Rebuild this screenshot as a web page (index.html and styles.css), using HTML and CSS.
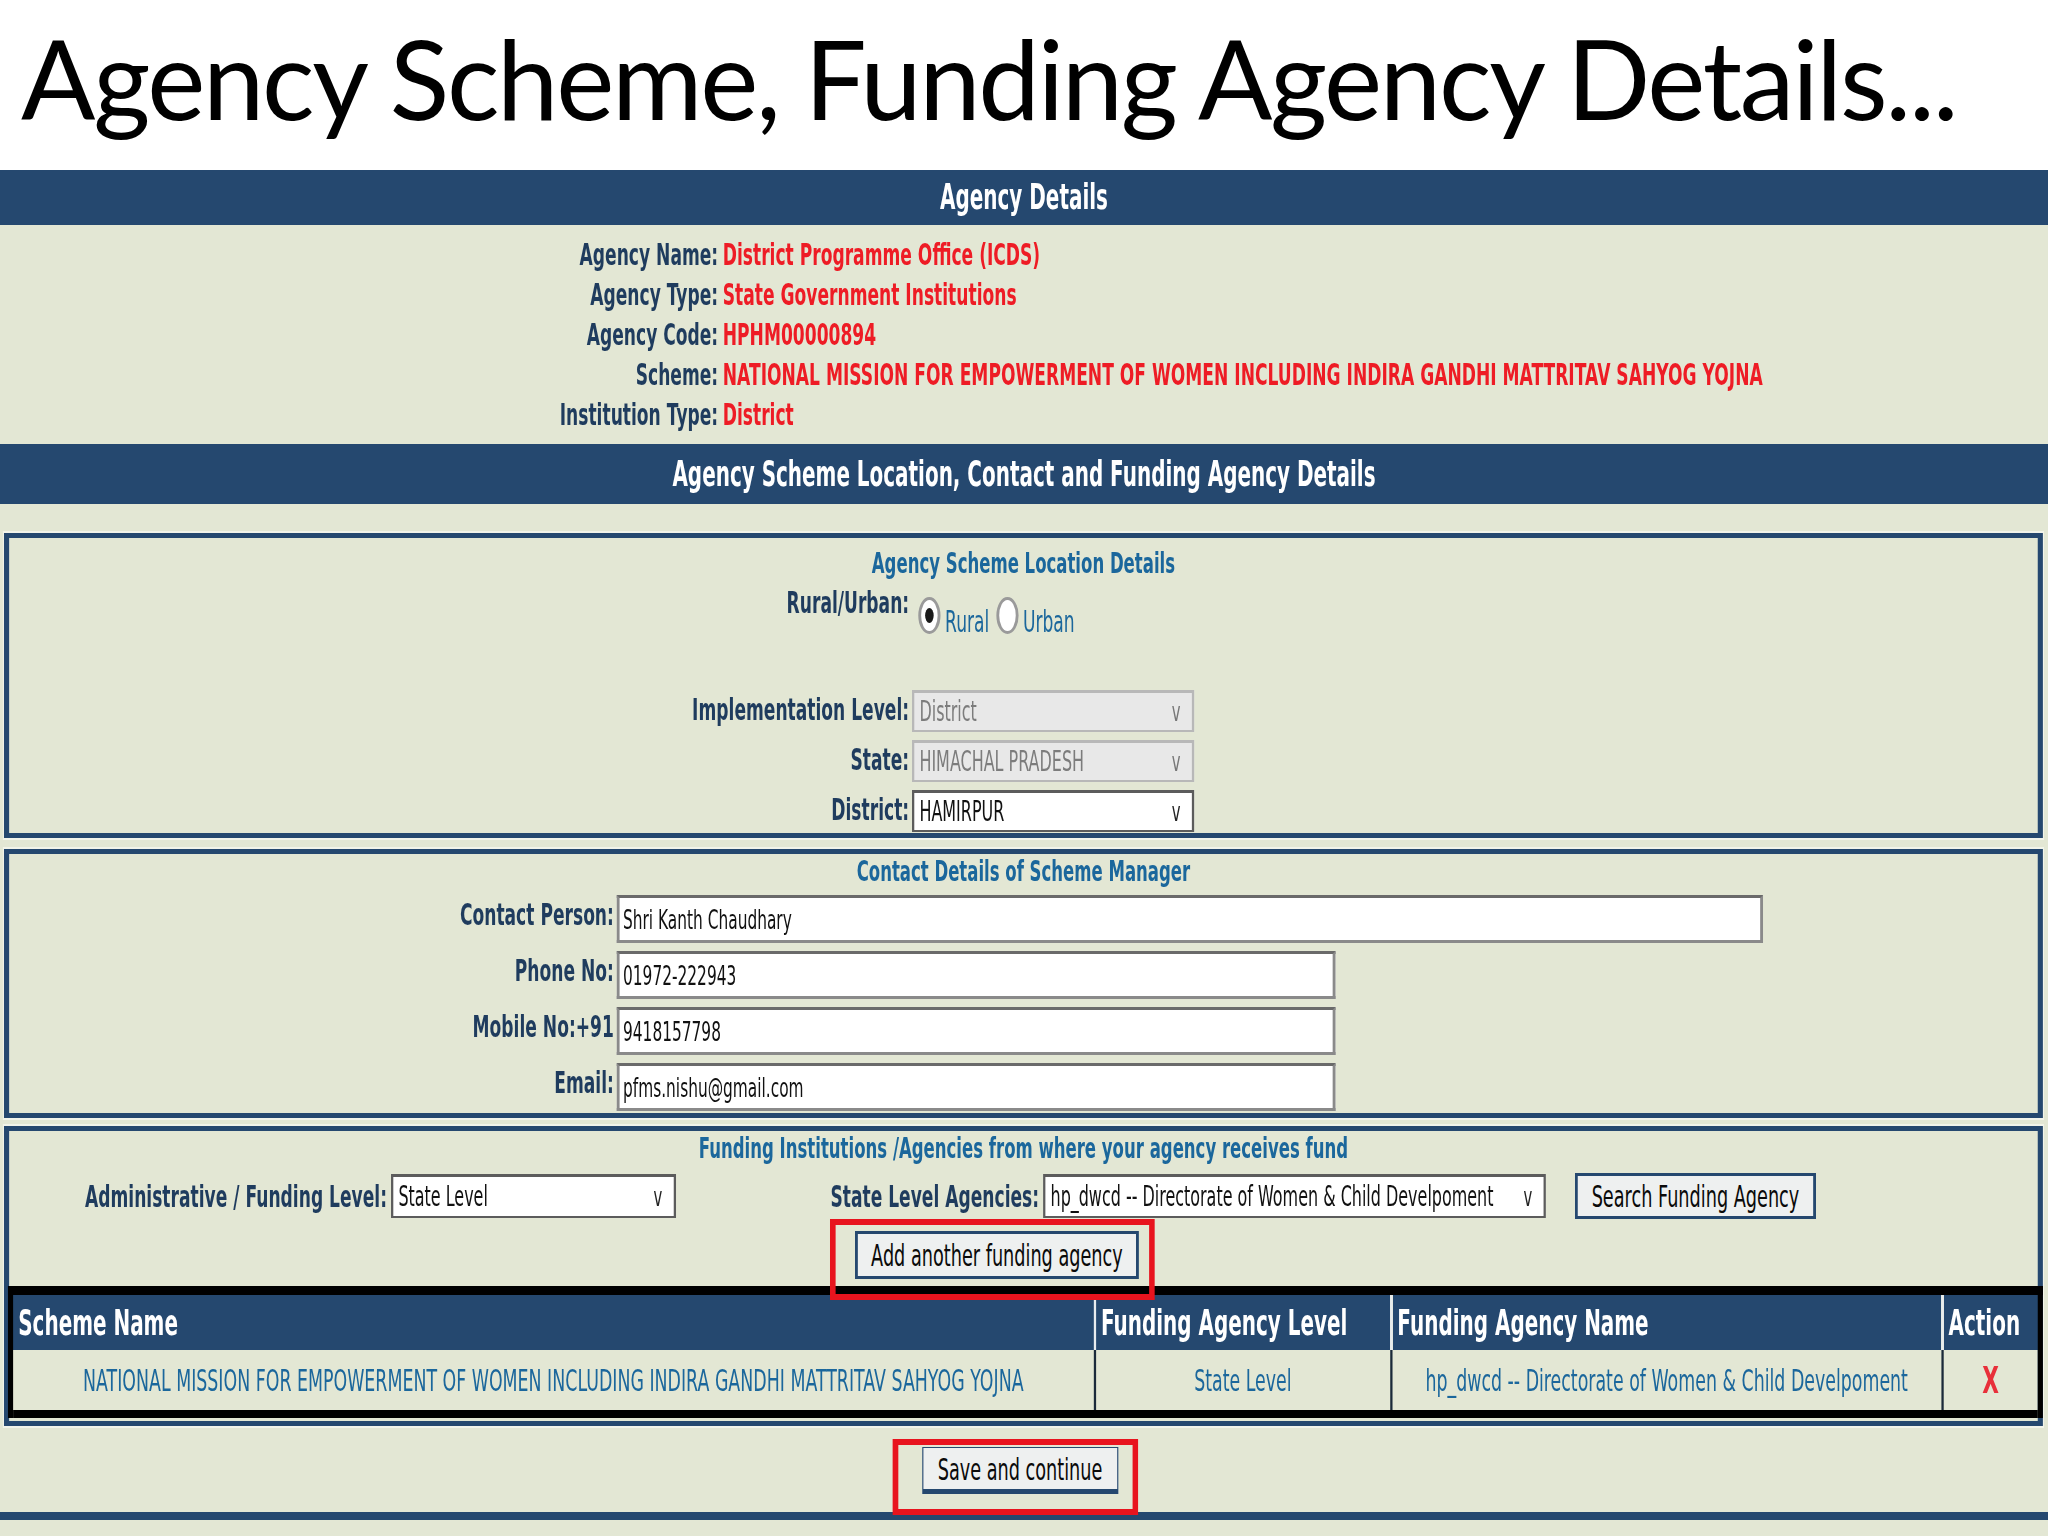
FILE: index.html
```html
<!DOCTYPE html>
<html lang="en">
<head>
    <meta charset="UTF-8">
    <meta name="viewport" content="width=device-width, initial-scale=1.0">
    <title>Agency Scheme, Funding Agency Details</title>
    <link rel="stylesheet" href="styles.css">
</head>
<body>
    <h1 class="slide-title">Agency Scheme, Funding Agency Details...</h1>

    <!-- the captured form is squeezed sideways, as in the slide -->
    <div class="sheet-frame">
    <div class="sheet">
        <div class="bar bar-first">Agency Details</div>
        <div class="agency-info">
            <div class="info-row"><span class="lbl">Agency Name:</span><span class="val">District Programme Office (ICDS)</span></div>
            <div class="info-row"><span class="lbl">Agency Type:</span><span class="val">State Government Institutions</span></div>
            <div class="info-row"><span class="lbl">Agency Code:</span><span class="val">HPHM00000894</span></div>
            <div class="info-row"><span class="lbl">Scheme:</span><span class="val">NATIONAL MISSION FOR EMPOWERMENT OF WOMEN INCLUDING INDIRA GANDHI MATTRITAV SAHYOG YOJNA</span></div>
            <div class="info-row"><span class="lbl">Institution Type:</span><span class="val">District</span></div>
        </div>
        <div class="bar bar-second">Agency Scheme Location, Contact and Funding Agency Details</div>

        <div class="form-area">
            <!-- location -->
            <div class="box box-location">
                <div class="box-title">Agency Scheme Location Details</div>
                <div class="loc-grid">
                    <label class="form-lbl">Rural/Urban:</label>
                    <div class="radios">
                        <span class="radio checked"></span><span class="radio-text">Rural</span>
                        <span class="radio"></span><span class="radio-text">Urban</span>
                    </div>
                    <label class="form-lbl spaced">Implementation Level:</label>
                    <div class="sel disabled spaced"><span>District</span><span class="arrow">v</span></div>
                    <label class="form-lbl">State:</label>
                    <div class="sel disabled"><span>HIMACHAL PRADESH</span><span class="arrow">v</span></div>
                    <label class="form-lbl">District:</label>
                    <div class="sel"><span>HAMIRPUR</span><span class="arrow">v</span></div>
                </div>
            </div>

            <!-- contact -->
            <div class="box box-contact">
                <div class="box-title">Contact Details of Scheme Manager</div>
                <div class="contact-grid">
                    <label class="form-lbl">Contact Person:</label>
                    <input class="txt txt-long" type="text" value="Shri Kanth Chaudhary">
                    <label class="form-lbl">Phone No:</label>
                    <input class="txt" type="text" value="01972-222943">
                    <label class="form-lbl">Mobile No:+91</label>
                    <input class="txt" type="text" value="9418157798">
                    <label class="form-lbl">Email:</label>
                    <input class="txt" type="text" value="pfms.nishu@gmail.com">
                </div>
            </div>

            <!-- funding -->
            <div class="box box-funding">
                <div class="box-title">Funding Institutions /Agencies from where your agency receives fund</div>
                <div class="fund-row">
                    <label class="form-lbl fund-lbl1">Administrative / Funding Level:</label>
                    <div class="sel sel-level"><span>State Level</span><span class="arrow">v</span></div>
                    <label class="form-lbl fund-lbl2">State Level Agencies:</label>
                    <div class="sel sel-agency"><span>hp_dwcd -- Directorate of Women &amp; Child Develpoment</span><span class="arrow">v</span></div>
                    <button class="btn btn-search">Search Funding Agency</button>
                </div>
                <div class="add-row">
                    <button class="btn btn-add marked">Add another funding agency</button>
                </div>
                <table class="fund-table">
                    <colgroup>
                        <col class="col-scheme">
                        <col class="col-level">
                        <col class="col-name">
                        <col class="col-action">
                    </colgroup>
                    <thead>
                        <tr>
                            <th>Scheme Name</th>
                            <th>Funding Agency Level</th>
                            <th>Funding Agency Name</th>
                            <th>Action</th>
                        </tr>
                    </thead>
                    <tbody>
                        <tr>
                            <td>NATIONAL MISSION FOR EMPOWERMENT OF WOMEN INCLUDING INDIRA GANDHI MATTRITAV SAHYOG YOJNA</td>
                            <td>State Level</td>
                            <td>hp_dwcd -- Directorate of Women &amp; Child Develpoment</td>
                            <td><span class="del">X</span></td>
                        </tr>
                    </tbody>
                </table>
            </div>

            <div class="save-row">
                <button class="btn btn-save marked">Save and continue</button>
            </div>
        </div>
        <div class="bottom-line"></div>
    </div>
    </div>
</body>
</html>
```

FILE: styles.css
```css
/* horizontal sizes inside .sheet are pre-scale (x 0.57 on screen) */
html{
    overflow: hidden;
}
body{
    margin: 0;
    background-color: #e3e7d4;
    font-family: "DejaVu Sans", Verdana, sans-serif;
    color: #1f3c5e;
    overflow: hidden;
}
.slide-title{
    margin: 0;
    height: 170px;
    box-sizing: border-box;
    background-color: #fff;
    padding-left: 21px;
    font-family: Lato, "Liberation Sans", sans-serif;
    font-weight: normal;
    font-size: 110px;
    letter-spacing: -2.3px;
    line-height: 154px;
    color: #000;
    white-space: nowrap;
}
.sheet-frame{
    width: 100%;
    overflow: hidden;
}
.sheet{
    width: 3593px;
    transform: scaleX(0.57);
    transform-origin: 0 0;
}
.bar{
    background-color: #25486f;
    color: #fff;
    text-align: center;
    font-weight: bold;
    font-size: 35px;
    white-space: nowrap;
}
.bar-first{
    height: 55px;
    line-height: 55px;
}
.bar-second{
    height: 60px;
    line-height: 60px;
}
.agency-info{
    height: 219px;
    box-sizing: border-box;
    padding-top: 10px;
}
.info-row{
    display: grid;
    grid-template-columns: 1260px 1fr;
    column-gap: 8px;
    height: 40px;
    line-height: 40px;
    font-weight: bold;
    font-size: 30px;
    white-space: nowrap;
}
.info-row .lbl{
    text-align: right;
}
.info-row .val{
    color: #ee1c25;
}
.form-area{
    padding-top: 29px;
}
.box{
    margin: 0 9px 0 7px;
    border-style: solid;
    border-color: #25486f;
    border-width: 5px 9px;
    box-shadow: 0 0 0 2px #f2f4ea;
}
.box-title{
    text-align: center;
    font-weight: bold;
    color: #1b679c;
    font-size: 29px;
    white-space: nowrap;
}
.form-lbl{
    text-align: right;
    font-weight: bold;
    font-size: 30px;
    white-space: nowrap;
}

/* location box */
.box-location{
    height: 305px;
    box-sizing: border-box;
}
.box-location .box-title{
    padding-top: 5px;
    line-height: 40px;
}
.loc-grid{
    display: grid;
    grid-template-columns: 1579px 495px;
    column-gap: 5px;
    row-gap: 8px;
}
.loc-grid .form-lbl{
    line-height: 40px;
}
.loc-grid .spaced{
    margin-top: 48px;
}
.radios{
    display: flex;
    align-items: flex-start;
    box-sizing: border-box;
    padding: 14px 0 0 11px;
    height: 51px;
}
.radio{
    flex: none;
    width: 39px;
    height: 37px;
    border-style: solid;
    border-color: #9a9a9a;
    border-width: 3px 5px;
    border-radius: 50%;
    background-color: #fff;
    box-sizing: border-box;
    position: relative;
}
.radio.checked::after{
    content: "";
    position: absolute;
    left: 7px;
    top: 8px;
    width: 15px;
    height: 15px;
    border-radius: 50%;
    background-color: #1a1a1a;
}
.radio-text{
    color: #1b679c;
    font-size: 30px;
    line-height: 28px;
    padding: 11px 12px 0 8px;
}
.sel{
    display: flex;
    justify-content: space-between;
    align-items: center;
    height: 42px;
    box-sizing: border-box;
    background-color: #fff;
    border-style: solid;
    border-color: #5c5c5c;
    border-width: 3px 4px 2px 4px;
    padding: 0 20px 0 9px;
    font-size: 28px;
    color: #111;
    white-space: nowrap;
    overflow: hidden;
}
.sel.disabled{
    background-color: #e8e8e8;
    border-color: #b8b8b8;
    color: #7c7c7c;
}
.sel .arrow{
    font-size: 26px;
    color: #222;
}
.sel.disabled .arrow{
    color: #777;
}

/* contact box */
.box-contact{
    margin-top: 11px;
    height: 269px;
    box-sizing: border-box;
}
.box-contact .box-title{
    line-height: 34px;
}
.contact-grid{
    display: grid;
    grid-template-columns: 1061px 1fr;
    column-gap: 5px;
    row-gap: 8px;
    margin-top: 7px;
}
.contact-grid .form-lbl{
    line-height: 40px;
}
.txt{
    width: 1261px;
    height: 48px;
    box-sizing: border-box;
    margin: 0;
    padding: 0 6px;
    border-style: solid;
    border-color: #8a8a8a;
    border-top-color: #6a6a6a;
    border-width: 3px 5px;
    background-color: #fff;
    font-family: inherit;
    font-size: 27px;
    color: #111;
}
.txt-long{
    width: 2011px;
}

/* funding box */
.box-funding{
    margin-top: 8px;
    height: 300px;
    box-sizing: border-box;
}
.box-funding .box-title{
    line-height: 34px;
}
.fund-row{
    display: flex;
    align-items: center;
    margin-top: 8px;
    height: 46px;
}
.fund-lbl1{
    width: 663px;
    margin-right: 7px;
}
.sel-level{
    width: 500px;
    height: 44px;
}
.fund-lbl2{
    width: 637px;
    margin-right: 7px;
}
.sel-agency{
    width: 882px;
    height: 44px;
}
.btn{
    font-family: inherit;
    font-size: 31px;
    color: #0a0a0a;
    background-color: #eef0f0;
    border-style: solid;
    border-color: #25486f;
    border-width: 3px 5px;
    padding: 0 8px;
    white-space: nowrap;
}
.btn-search{
    margin-left: 51px;
    width: 423px;
    height: 46px;
}
.add-row{
    margin-top: 12px;
    padding-left: 1484px;
    height: 48px;
}
.btn-add{
    width: 498px;
    height: 48px;
}
.marked{
    position: relative;
}
.btn-add::after,
.btn-save::after{
    content: "";
    position: absolute;
    border-style: solid;
    border-color: #e8141e;
    border-width: 6px 10px;
}
.btn-add::after{
    left: -49px;
    right: -33px;
    top: -15px;
    bottom: -24px;
}
.fund-table{
    margin: 7px -2px 0 -2px;
    width: calc(100% + 4px);
    table-layout: fixed;
    border-collapse: collapse;
    border-style: solid;
    border-color: #000;
    border-width: 9px 9px 8px 9px;
    white-space: nowrap;
}
.fund-table th{
    background-color: #25486f;
    color: #fff;
    text-align: left;
    font-size: 35px;
    height: 55px;
    padding: 0 9px;
    border-left: 4px solid #e8ecef;
    overflow: hidden;
}
.fund-table td{
    height: 60px;
    text-align: center;
    color: #1b679c;
    font-size: 30.5px;
    border-left: 4px solid #1b2a3a;
    padding: 0;
    overflow: hidden;
}
.fund-table th:first-child,
.fund-table td:first-child{
    border-left: none;
}
.col-scheme{ width: 1902px; }
.col-level{ width: 520px; }
.col-name{ width: 967px; }
.col-action{ width: 172px; }
.del{
    color: #e8303a;
    font-weight: bold;
    font-size: 38px;
}

.save-row{
    display: flex;
    justify-content: center;
    padding: 21px 14px 18px 0;
}
.btn-save{
    width: 344px;
    height: 47px;
    border-width: 1px 2px 5px 2px;
}
.btn-save::after{
    left: -54px;
    right: -37px;
    top: -9px;
    bottom: -26px;
}
.bottom-line{
    height: 8px;
    background-color: #25486f;
}
```
